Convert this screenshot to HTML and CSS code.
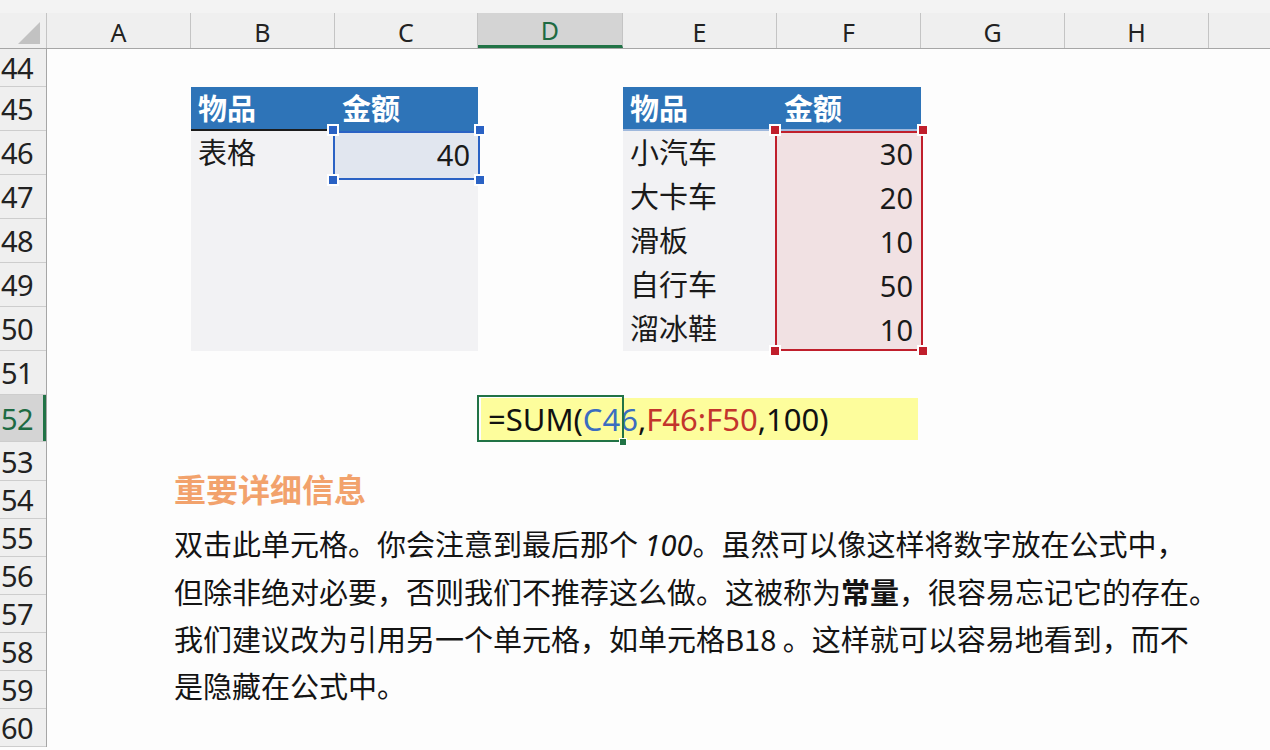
FILE: index.html
```html
<!DOCTYPE html>
<html lang="zh-CN">
<head>
    <meta charset="UTF-8">
    <title>SUM 常量</title>
    <link rel="stylesheet" href="styles.css">
</head>
<body>
    <div class="top-strip"></div>
    <div class="col-heads">
        <div class="corner"><span class="tri"></span></div>
        <div class="ch w144">A</div>
        <div class="ch w144">B</div>
        <div class="ch w143">C</div>
        <div class="ch w145 active">D</div>
        <div class="ch w154">E</div>
        <div class="ch w144">F</div>
        <div class="ch w144">G</div>
        <div class="ch w144">H</div>
        <div class="ch rest"></div>
    </div>
    <div class="main">
        <div class="row-heads">
            <div class="rh r38">44</div>
            <div class="rh r44">45</div>
            <div class="rh r44">46</div>
            <div class="rh r44">47</div>
            <div class="rh r44">48</div>
            <div class="rh r44">49</div>
            <div class="rh r44">50</div>
            <div class="rh r44">51</div>
            <div class="rh r47 active">52</div>
            <div class="rh r39">53</div>
            <div class="rh r38">54</div>
            <div class="rh r38">55</div>
            <div class="rh r38">56</div>
            <div class="rh r38">57</div>
            <div class="rh r38">58</div>
            <div class="rh r38">59</div>
            <div class="rh r38">60</div>
        </div>
        <div class="sheet">
            <div class="tbl tbl-left">
                <div class="th">物品</div>
                <div class="th">金额</div>
                <div class="td first">表格</div>
                <div class="td num sel sel-blue">40
                    <span class="hd tl"></span><span class="hd tr"></span>
                    <span class="hd bl"></span><span class="hd br"></span>
                </div>
            </div>

            <div class="tbl tbl-right">
                <div class="th">物品</div>
                <div class="th">金额</div>
                <div class="items">
                    <div class="td">小汽车</div>
                    <div class="td">大卡车</div>
                    <div class="td">滑板</div>
                    <div class="td">自行车</div>
                    <div class="td">溜冰鞋</div>
                </div>
                <div class="amounts sel sel-red">
                    <div class="td num">30</div>
                    <div class="td num">20</div>
                    <div class="td num">10</div>
                    <div class="td num">50</div>
                    <div class="td num">10</div>
                    <span class="hd tl"></span><span class="hd tr"></span>
                    <span class="hd bl"></span><span class="hd br"></span>
                </div>
            </div>

            <div class="formula">
                <div class="formula-fill">=SUM(<span class="ref-blue">C46</span>,<span class="ref-red">F46:F50</span>,100)</div>
                <div class="active-cell"><span class="fill-handle"></span></div>
            </div>

            <div class="notes">
                <h2>重要详细信息</h2>
                <p>双击此单元格。你会注意到最后那个 <em>100</em>。虽然可以像这样将数字放在公式中，</p>
                <p>但除非绝对必要，否则我们不推荐这么做。这被称为<strong>常量</strong>，很容易忘记它的存在。</p>
                <p>我们建议改为引用另一个单元格，如单元格B18 。这样就可以容易地看到，而不</p>
                <p>是隐藏在公式中。</p>
            </div>
        </div>
    </div>
</body>
</html>
```

FILE: styles.css
```css
body {
    margin: 0;
    width: 1270px;
    height: 750px;
    overflow: hidden;
    background: #fdfdfd;
    font-family: "Noto Sans", "Noto Sans CJK SC", sans-serif;
    color: #1a1a1a;
}
.top-strip {
    height: 13px;
    background: #f3f3f3;
}

/* column headers */
.col-heads {
    display: flex;
    height: 35px;
    background: #efefef;
    border-bottom: 1px solid #a6a6a6;
}
.corner {
    width: 46px;
    flex: none;
    border-right: 1px solid #c4c4c4;
    position: relative;
}
.tri {
    position: absolute;
    right: 6px;
    bottom: 4px;
    width: 0;
    height: 0;
    border-left: 22px solid transparent;
    border-bottom: 22px solid #c2c2c2;
}
.ch {
    flex: none;
    box-sizing: border-box;
    border-right: 1px solid #c4c4c4;
    text-align: center;
    font-size: 25px;
    line-height: 38px;
    color: #222;
}
.ch.active {
    background: #d4d4d4;
    color: #1e6b43;
    border-bottom: 3px solid #217346;
    line-height: 35px;
}
.w143 { width: 143px; }
.w144 { width: 144px; }
.w145 { width: 145px; }
.w154 { width: 154px; }
.ch.rest { flex: 1; border-right: none; }

.main {
    display: flex;
}

/* row headers */
.row-heads {
    width: 46px;
    flex: none;
    background: #efefef;
    border-right: 1px solid #a6a6a6;
}
.rh {
    box-sizing: border-box;
    border-bottom: 1px solid #cdcdcd;
    font-size: 29px;
    letter-spacing: -0.5px;
    padding-left: 1px;
    color: #222;
    display: flex;
    align-items: center;
}
.rh.active {
    background: #d4d4d4;
    color: #1e6b43;
    box-shadow: inset -3px 0 0 #217346;
}
.r38 { height: 38px; }
.r39 { height: 39px; }
.r44 { height: 44px; }
.r47 { height: 47px; }

/* sheet grid: columns A..I, rows 44..60 */
.sheet {
    flex: 1;
    display: grid;
    grid-template-columns: 144px 144px 143px 145px 154px 144px 144px 144px 1fr;
    grid-template-rows: 38px repeat(7, 44px) 47px 39px repeat(7, 38px);
}

.tbl {
    display: grid;
    grid-template-rows: repeat(6, 44px);
    background: #f2f2f4;
    font-size: 29px;
}
.tbl-left {
    grid-area: 2 / 2 / 8 / 4;
    grid-template-columns: 144px 143px;
    align-content: start;
}
.tbl-right {
    grid-area: 2 / 5 / 8 / 7;
    grid-template-columns: 154px 144px;
}
.th {
    background: #2e74b8;
    color: #fff;
    font-weight: bold;
    line-height: 44px;
    padding-left: 7px;
}
.tbl-left .th:first-child {
    box-shadow: inset 0 -2px 0 #1c1c1c;
}
.tbl-right .th {
    box-shadow: inset 0 -2px 0 #9fb8dc;
}
.td {
    line-height: 44px;
    height: 44px;
    padding: 0 7px;
    white-space: nowrap;
}
.td.num {
    text-align: right;
    padding-right: 8px;
}
.items {
    grid-row: 2 / 7;
    grid-column: 1;
}
.amounts {
    grid-row: 2 / 7;
    grid-column: 2;
}

/* range selection outlines */
.sel {
    position: relative;
}
.sel::before {
    content: "";
    position: absolute;
    left: -2px;
    right: -2px;
    top: 1px;
    bottom: -2px;
    border: 2px solid;
    pointer-events: none;
}
.sel-blue {
    background: #e1e6ef;
    margin-top: 1px;
    height: 46px;
    line-height: 46px;
}
.sel-blue::before { border-color: #2a62c4; top: -1px; }
.sel-red {
    background: #f1e1e3;
    margin-top: 1px;
}
.sel-red::before { border-color: #c01f2c; top: -1px; bottom: 0; }
.hd {
    position: absolute;
    width: 8px;
    height: 8px;
    border: 2px solid #fff;
}
.sel-blue .hd { background: #2a62c4; }
.sel-red .hd { background: #c01f2c; }
.hd.tl { left: -8px; top: -8px; }
.hd.tr { right: -8px; top: -8px; }
.hd.bl { left: -8px; bottom: -8px; }
.hd.br { right: -8px; bottom: -8px; }
.sel-red .hd.bl, .sel-red .hd.br { bottom: -6px; }

/* formula cell D52 */
.formula {
    grid-area: 9 / 4 / 10 / 7;
    position: relative;
    font-size: 31px;
}
.formula-fill {
    margin: 3px 3px 2px 3px;
    height: 42px;
    line-height: 42px;
    background: #fdfd9c;
    padding-left: 7px;
    color: #111;
    white-space: nowrap;
}
.ref-blue { color: #3a6dc0; }
.ref-red { color: #c3342c; }
.active-cell {
    position: absolute;
    left: -1px;
    top: 0;
    width: 143px;
    height: 43px;
    border: 2px solid #217346;
    pointer-events: none;
}
.fill-handle {
    position: absolute;
    right: -5px;
    bottom: -6px;
    width: 6px;
    height: 6px;
    background: #217346;
    border: 1px solid #fff;
}

/* notes text */
.notes {
    grid-area: 10 / 1 / 18 / 10;
    padding-left: 127px;
    font-family: "Noto Sans CJK SC", sans-serif;
    white-space: nowrap;
}
.notes h2 {
    margin: 27px 0 13px;
    font-size: 32px;
    line-height: 38px;
    font-weight: bold;
    color: #f2a26c;
}
.notes p {
    margin: 0;
    font-size: 29px;
    line-height: 47px;
    color: #141414;
}
.notes em {
    font-family: "Noto Sans", sans-serif;
    font-style: italic;
}
.notes strong {
    font-weight: bold;
}
```
